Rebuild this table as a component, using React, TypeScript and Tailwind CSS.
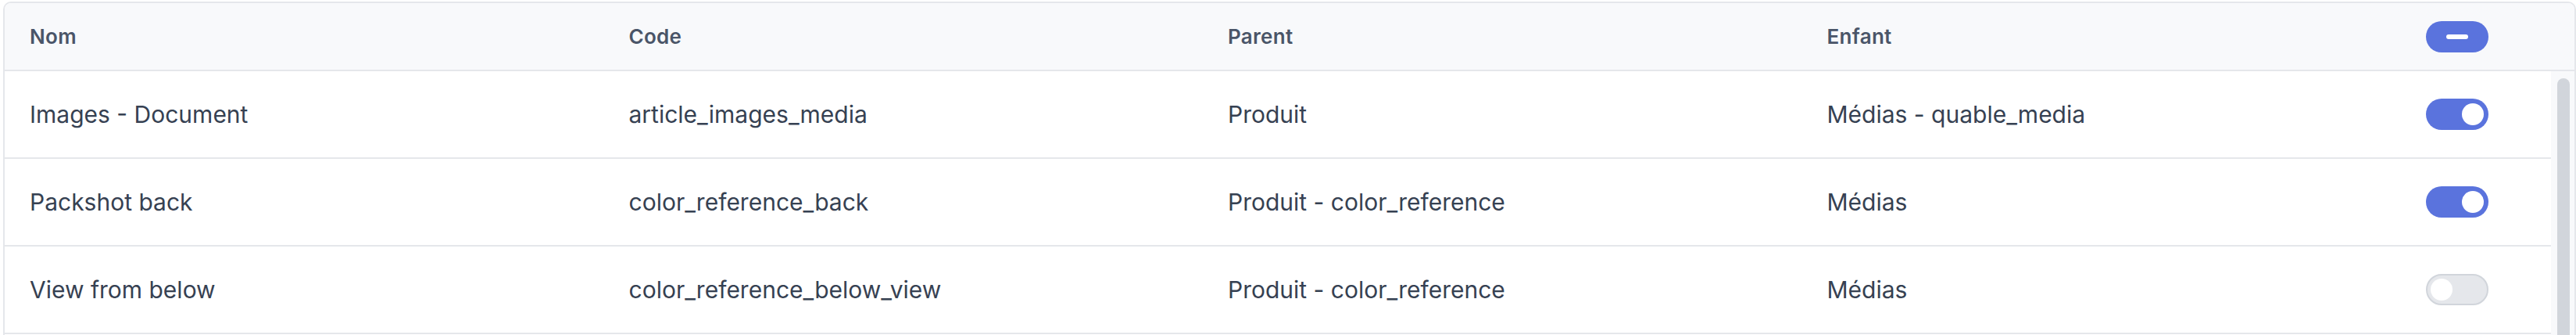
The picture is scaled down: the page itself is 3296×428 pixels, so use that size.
import React from "react"

type Row = {
  name: string
  code: string
  parent: string
  child: string
  enabled: boolean
}

const rows: Row[] = [
  { name: "Images - Document", code: "article_images_media", parent: "Produit", child: "Médias - quable_media", enabled: true },
  { name: "Packshot back", code: "color_reference_back", parent: "Produit - color_reference", child: "Médias", enabled: true },
  { name: "View from below", code: "color_reference_below_view", parent: "Produit - color_reference", child: "Médias", enabled: false },
]

function Toggle({ on }: { on: boolean }) {
  if (on) {
    return (
      <div className="flex h-[40px] w-[80px] items-center justify-end rounded-full bg-[#5a73dd] pr-[6px]">
        <div className="h-[28px] w-[28px] rounded-full bg-white" />
      </div>
    )
  }
  return (
    <div className="flex h-[40px] w-[80px] items-center justify-start rounded-full border-2 border-[#d1d5db] bg-[#e5e7eb] pl-[4px]">
      <div className="h-[28px] w-[28px] rounded-full bg-white" />
    </div>
  )
}

export default function App() {
  return (
    <div className="bg-white pl-[4px] pt-[2px] font-['Inter',sans-serif]">
      <div className="overflow-hidden rounded-t-[10px] border-2 border-b-0 border-[#e5e7eb]">
        {/* Header */}
        <div className="flex h-[87px] border-b-2 border-[#e5e7eb] bg-[#f8f9fb]">
          <div className="grid flex-1 grid-cols-[1fr_1fr_1fr_1fr_192px] items-center text-[26px] font-semibold tracking-[0.3px] text-[#4a5568]">
            <div className="pl-[32px]">Nom</div>
            <div className="pl-[32px]">Code</div>
            <div className="pl-[32px]">Parent</div>
            <div className="pl-[32px]">Enfant</div>
            <div className="pl-[32px]">
              <div className="flex h-[40px] w-[80px] items-center justify-center rounded-full bg-[#5a73dd]">
                <div className="h-[6px] w-[28px] rounded-full bg-white" />
              </div>
            </div>
          </div>
          <div className="w-[30px]" />
        </div>

        {/* Body */}
        <div className="flex h-[340px] overflow-hidden">
          <div className="flex-1">
            {rows.map((r) => (
              <div
                key={r.code}
                className="grid h-[112px] grid-cols-[1fr_1fr_1fr_1fr_192px] items-center border-b-2 border-[#e5e7eb] text-[30px] text-[#364152]"
              >
                <div className="pl-[32px]">{r.name}</div>
                <div className="pl-[32px]">{r.code}</div>
                <div className="pl-[32px]">{r.parent}</div>
                <div className="pl-[32px]">{r.child}</div>
                <div className="pl-[32px]">
                  <Toggle on={r.enabled} />
                </div>
              </div>
            ))}
          </div>
          <div className="w-[30px] bg-[#f8f9fb] pl-[8px] pt-[9px]">
            <div className="h-[400px] w-[16px] rounded-full bg-[#d1d5db]" />
          </div>
        </div>
      </div>
    </div>
  )
}
